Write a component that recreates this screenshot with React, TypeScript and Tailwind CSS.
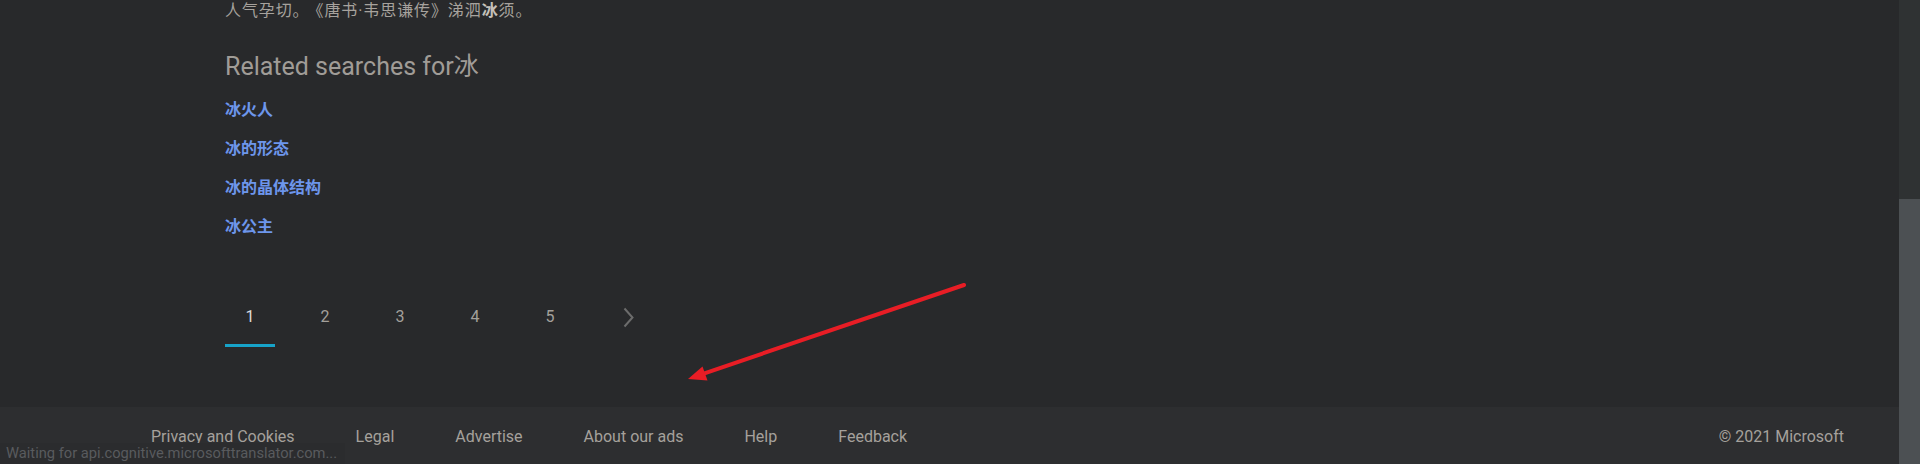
import React from 'react';

const related = ['冰火人', '冰的形态', '冰的晶体结构', '冰公主'];
const pages = [1, 2, 3, 4, 5];
const footerLinks = ['Privacy and Cookies', 'Legal', 'Advertise', 'About our ads', 'Help', 'Feedback'];

export default function App() {
  return (
    <div className="relative flex h-[464px] w-[1920px] overflow-hidden bg-[#28292b] font-['Roboto','Noto_Sans_CJK_SC',sans-serif]">
      <div className="flex flex-1 flex-col">
        <main className="h-[407px] pl-[225px]">
          <p className="-mt-[3px] text-[16px] leading-[24px] tracking-[0.9px] text-[#a6a29d] font-['Noto_Sans_CJK_SC',sans-serif]">
            人气孕切。<span className="ml-[6px]">《</span>唐书<span className="font-['Roboto']">·</span>韦思谦传》涕泗<b className="font-bold text-[#c4c0ba]">冰</b>须。
          </p>

          <h2 className="mt-[28px] text-[25px] leading-[32px] text-[#a09c97]">Related searches for冰</h2>

          <ul className="mt-[13px] flex flex-col gap-[15px]">
            {related.map((r) => (
              <li key={r} className="h-[24px] text-[16px] font-bold leading-[24px] text-[#6d96ec] font-['Noto_Sans_CJK_SC',sans-serif]">
                <a>{r}</a>
              </li>
            ))}
          </ul>

          <nav className="mt-[68px] flex items-start gap-[25px]">
            {pages.map((p) => (
              <div key={p} className="flex w-[50px] flex-col items-center">
                <span className={`text-[16px] leading-[24px] ${p === 1 ? 'text-[#dcdcdc]' : 'text-[#a3a09b]'}`}>{p}</span>
                {p === 1 && <span className="mt-[15px] h-[3px] w-full bg-[#17a3c9]" />}
              </div>
            ))}
            <div className="flex h-[24px] w-[50px] items-center justify-center pl-[6px]">
              <svg width="11" height="21" viewBox="0 0 11 21" fill="none">
                <polyline points="1.5,1.5 9.5,10.5 1.5,19.5" stroke="#6c6c6c" strokeWidth="2" />
              </svg>
            </div>
          </nav>
        </main>

        <footer className="flex h-[57px] items-center bg-[#2d2e30] pl-[151px] pr-[55px] pt-[2px] text-[16px] text-[#a5a19c]">
          <div className="flex gap-[61px]">
            {footerLinks.map((l) => (
              <a key={l}>{l}</a>
            ))}
          </div>
          <span className="ml-auto">© 2021 Microsoft</span>
        </footer>
      </div>

      <div className="flex w-[21px] flex-col bg-[#2f3233]">
        <div className="h-[199px]" />
        <div className="flex-1 bg-[#4c5053]" />
      </div>

      <svg className="pointer-events-none absolute left-0 top-0" width="1920" height="464">
        <line x1="964" y1="285" x2="703" y2="373.8" stroke="#e81d25" strokeWidth="4" strokeLinecap="round" />
        <polygon points="688,379 702.5,366.4 705,373.5 707.5,380.6" fill="#e81d25" />
      </svg>

      <div className="absolute bottom-0 left-0 h-[21px] w-[345px] bg-[#2b2c2e] pl-[6px] text-[14.7px] leading-[21px] text-[#595b5e]">
        Waiting for api.cognitive.microsofttranslator.com...
      </div>
    </div>
  );
}
